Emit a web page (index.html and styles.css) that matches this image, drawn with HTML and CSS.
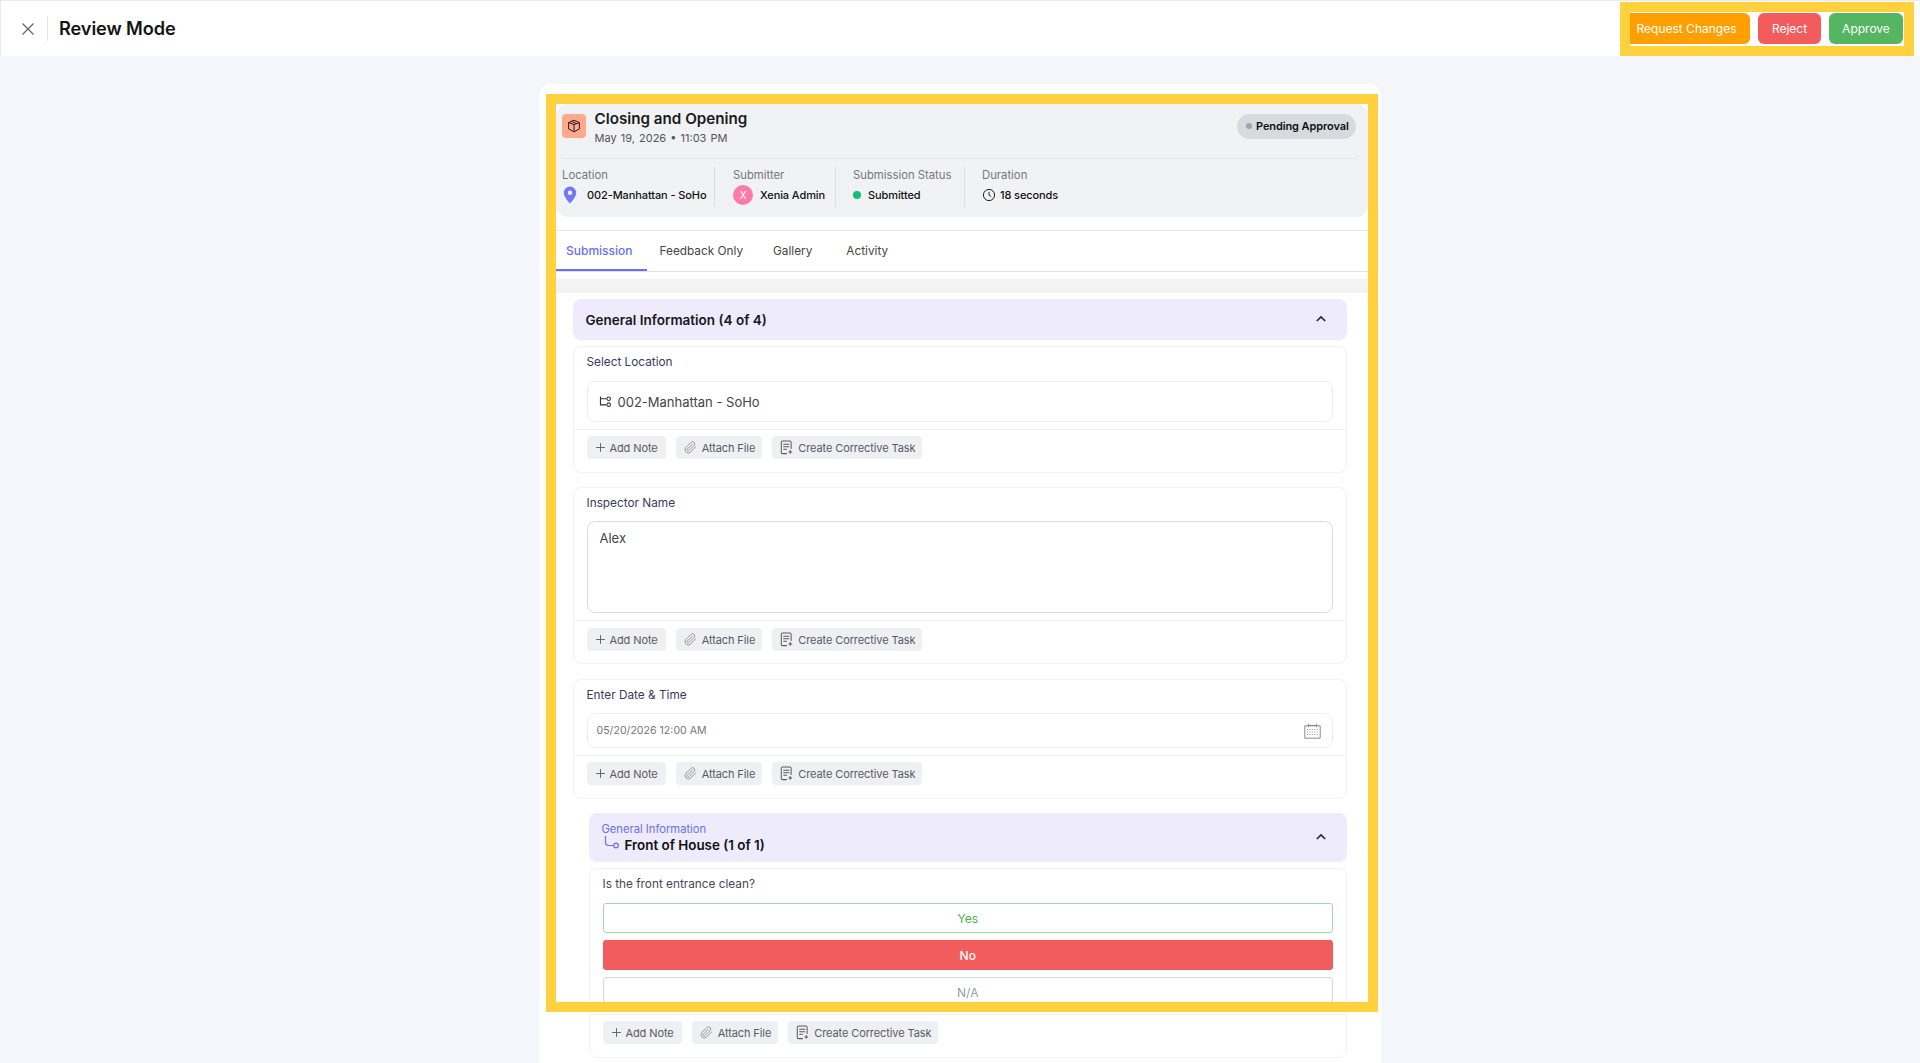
FILE: index.html
```html
<!DOCTYPE html>
<html lang="en">
<head>
<meta charset="utf-8">
<title>Review Mode</title>
<link rel="stylesheet" href="styles.css">
</head>
<body>
<svg class="defs" width="0" height="0" aria-hidden="true">
  <symbol id="i-plus" viewBox="0 0 12 12"><path d="M6 1.2v9.6M1.2 6h9.6" fill="none" stroke="currentColor" stroke-width="1"/></symbol>
  <symbol id="i-clip" viewBox="0 0 24 24"><path d="M21.44 11.05l-9.19 9.19a6 6 0 0 1-8.49-8.49l9.19-9.19a4 4 0 0 1 5.66 5.66l-9.2 9.19a2 2 0 0 1-2.83-2.83l8.49-8.48" fill="none" stroke="currentColor" stroke-width="1.6" stroke-linecap="round" stroke-linejoin="round"/></symbol>
  <symbol id="i-task" viewBox="0 0 14 16"><path d="M7 14.6H3a1.6 1.6 0 0 1-1.6-1.6V2.6A1.6 1.6 0 0 1 3 1h7.4A1.6 1.6 0 0 1 12 2.6V9M4 4.6h5.6M4 7.2h5.6M4 9.8h3" fill="none" stroke="currentColor" stroke-width="1.1" stroke-linecap="round"/><path d="M11 10.8v4M9 12.8h4" fill="none" stroke="currentColor" stroke-width="1.1"/></symbol>
  <symbol id="i-up" viewBox="0 0 12 12"><path d="M1.8 8 6 3.9 10.2 8" fill="none" stroke="currentColor" stroke-width="1.7"/></symbol>
</svg>

<header class="topbar">
  <div class="topbar-left">
    <svg class="close-icon" viewBox="0 0 14 14"><path d="M1.5 1.5l11 11M12.5 1.5l-11 11" fill="none" stroke="currentColor" stroke-width="1.3"/></svg>
    <span class="topbar-sep"></span>
    <h1 class="topbar-title">Review Mode</h1>
  </div>
  <div class="topbar-actions">
    <button class="act act-orange">Request Changes</button>
    <button class="act act-red">Reject</button>
    <button class="act act-green">Approve</button>
  </div>
  <div class="frame frame-actions"></div>
</header>

<main class="page">
  <div class="sheet">
    <section class="summary">
      <div class="summary-head">
        <span class="form-icon">
          <svg viewBox="0 0 14 14"><path d="M7 1.2 12.4 3.6V10L7 12.8 1.6 10V3.6ZM1.6 3.6 7 5.6l5.4-2M7 5.6v7.2M4.4 2.4l5.4 2.2" fill="none" stroke="#2b1c1c" stroke-width="1" stroke-linejoin="round"/></svg>
        </span>
        <div class="form-title">
          <h2>Closing and Opening</h2>
          <p>May 19, 2026 • 11:03 PM</p>
        </div>
        <span class="pill"><i></i>Pending Approval</span>
      </div>
      <div class="meta">
        <div class="meta-col meta-location">
          <span class="meta-label">Location</span>
          <span class="meta-value">
            <svg class="pin" viewBox="0 0 14 18"><path fill-rule="evenodd" d="M7 .6A6.2 6.2 0 0 0 .8 6.8c0 4 4.2 8.6 6.2 10.6 2-2 6.2-6.6 6.2-10.6A6.2 6.2 0 0 0 7 .6Zm0 8.3a2.2 2.2 0 1 1 0-4.4 2.2 2.2 0 0 1 0 4.4Z" fill="#7377f7"/></svg>
            002-Manhattan - SoHo
          </span>
        </div>
        <div class="meta-col meta-submitter">
          <span class="meta-label">Submitter</span>
          <span class="meta-value"><span class="avatar">X</span>Xenia Admin</span>
        </div>
        <div class="meta-col meta-status">
          <span class="meta-label">Submission Status</span>
          <span class="meta-value"><i class="dot"></i>Submitted</span>
        </div>
        <div class="meta-col meta-duration">
          <span class="meta-label">Duration</span>
          <span class="meta-value">
            <svg class="clock" viewBox="0 0 14 14"><circle cx="7" cy="7" r="5.6" fill="none" stroke="#222" stroke-width="1"/><path d="M7 3.8V7l2.2 1.6" fill="none" stroke="#222" stroke-width="1"/></svg>
            18 seconds
          </span>
        </div>
      </div>
    </section>

    <nav class="tabs">
      <a class="tab tab-active">Submission</a>
      <a class="tab tab-feedback">Feedback Only</a>
      <a class="tab tab-gallery">Gallery</a>
      <a class="tab tab-activity">Activity</a>
    </nav>
    <div class="strip"></div>

    <div class="sections">
      <div class="section-head">
        <h3>General Information (4 of 4)</h3>
        <svg class="chev"><use href="#i-up"/></svg>
      </div>

      <article class="q q-first">
        <label class="q-label">Select Location</label>
        <div class="field field-loc">
          <svg class="tree" viewBox="0 0 14 14"><path d="M1.6 1.6v9h6M1.6 4h6" fill="none" stroke="#333" stroke-width="1.2"/><circle cx="10.4" cy="4" r="1.9" fill="none" stroke="#333" stroke-width="1.2"/><circle cx="10.4" cy="10.4" r="1.9" fill="none" stroke="#333" stroke-width="1.2"/></svg>
          002-Manhattan - SoHo
        </div>
        <div class="tools">
          <button class="tool"><svg class="ti ti-plus"><use href="#i-plus"/></svg>Add Note</button>
          <button class="tool"><svg class="ti ti-clip"><use href="#i-clip"/></svg>Attach File</button>
          <button class="tool"><svg class="ti ti-task"><use href="#i-task"/></svg>Create Corrective Task</button>
        </div>
      </article>

      <article class="q q-second">
        <label class="q-label">Inspector Name</label>
        <div class="field field-text">Alex</div>
        <div class="tools tools-tall">
          <button class="tool"><svg class="ti ti-plus"><use href="#i-plus"/></svg>Add Note</button>
          <button class="tool"><svg class="ti ti-clip"><use href="#i-clip"/></svg>Attach File</button>
          <button class="tool"><svg class="ti ti-task"><use href="#i-task"/></svg>Create Corrective Task</button>
        </div>
      </article>

      <article class="q q-third">
        <label class="q-label">Enter Date &amp; Time</label>
        <div class="field field-date">
          <span>05/20/2026 12:00 AM</span>
          <svg class="cal" viewBox="0 0 17 16"><path d="M.8 2.8h15.4v12.4H.8zM4.5 .8v3.2M12.5 .8v3.2M4.5 2.4h8" fill="none" stroke="#8a8a8a" stroke-width="1"/><path d="M3 6.5h11M3 9h11M3 11.5h11" fill="none" stroke="#8f8f8f" stroke-width="1" stroke-dasharray="1 1.4"/></svg>
        </div>
        <div class="tools">
          <button class="tool"><svg class="ti ti-plus"><use href="#i-plus"/></svg>Add Note</button>
          <button class="tool"><svg class="ti ti-clip"><use href="#i-clip"/></svg>Attach File</button>
          <button class="tool"><svg class="ti ti-task"><use href="#i-task"/></svg>Create Corrective Task</button>
        </div>
      </article>

      <div class="nested">
        <div class="sub-head">
          <div>
            <span class="sub-parent">General Information</span>
            <div class="sub-title">
              <svg class="branch" viewBox="0 0 16 14"><path d="M1.5 0v6.5a3 3 0 0 0 3 3h5" fill="none" stroke="#6c6ef5" stroke-width="1.2"/><circle cx="12" cy="9.5" r="2.3" fill="none" stroke="#6c6ef5" stroke-width="1.2"/></svg>
              <h4>Front of House (1 of 1)</h4>
            </div>
          </div>
          <svg class="chev"><use href="#i-up"/></svg>
        </div>
        <article class="q q-nested">
          <label class="q-label q-label-dark">Is the front entrance clean?</label>
          <div class="choices">
            <button class="choice choice-yes">Yes</button>
            <button class="choice choice-no">No</button>
            <button class="choice choice-na">N/A</button>
          </div>
          <div class="tools">
            <button class="tool"><svg class="ti ti-plus"><use href="#i-plus"/></svg>Add Note</button>
            <button class="tool"><svg class="ti ti-clip"><use href="#i-clip"/></svg>Attach File</button>
            <button class="tool"><svg class="ti ti-task"><use href="#i-task"/></svg>Create Corrective Task</button>
          </div>
        </article>
      </div>
    </div>
  </div>
</main>
<div class="frame frame-sheet"></div>
</body>
</html>
```

FILE: styles.css
```css
* { box-sizing: border-box; }
html, body { height: 100%; }
body {
  margin: 0;
  height: 1063px;
  overflow: hidden;
  position: relative;
  background: #f5f6fb;
  color: #111;
  font-family: Inter, "Noto Sans", "Liberation Sans", sans-serif;
}
.defs { position: absolute; }
h1, h2, h3, h4, p { margin: 0; }
button { font-family: inherit; border: 0; padding: 0; }

/* Top bar */
.topbar {
  position: relative;
  height: 56px;
  display: flex;
  align-items: center;
  justify-content: space-between;
  background: #fff;
  border-top: 1px solid #ececec;
  border-left: 1px solid #ececec;
}
.topbar-left { display: flex; align-items: center; }
.close-icon { width: 14px; height: 14px; margin-left: 20px; color: #666; }
.topbar-sep { width: 1px; height: 25px; background: #e4e4e4; margin-left: 12px; }
.topbar-title { font-size: 18.2px; font-weight: 600; line-height: 24px; margin-left: 11px; margin-top: -1px; letter-spacing: -.1px; color: #141414; }
.topbar-actions { display: flex; gap: 8px; margin-right: 17px; }
.act {
  height: 31px;
  border-radius: 6px;
  color: #fff;
  font-size: 12px;
  font-weight: 400;
}
.act-orange { width: 127px; background: #ffa000; }
.act-red { width: 63px; background: #f25c5c; }
.act-green { width: 74px; background: #55b560; }

/* Highlight frames laid over the page */
.frame { position: absolute; border: 10px solid #ffd13f; pointer-events: none; }
.frame-actions { right: 6px; top: 1px; width: 294px; height: 54px; }
.frame-sheet { left: 546px; top: 94px; width: 832px; height: 918px; }

/* Sheet */
.page { display: flex; justify-content: center; padding-top: 28px; }
.sheet {
  width: 842px;
  height: 979px;
  background: #fff;
  border-radius: 12px 12px 0 0;
  padding: 20px 13px 0 17px;
  overflow: hidden;
}
.summary { background: #f1f2f4; border-radius: 12px; height: 113px; padding: 10px 11px 0 6px; }
.summary-head {
  display: flex;
  align-items: flex-start;
  height: 45px;
  border-bottom: 1px solid #e5e6e9;
}
.form-icon {
  width: 24px; height: 24px;
  border-radius: 4px;
  background: #ffa98d;
  display: flex; align-items: center; justify-content: center;
}
.form-icon svg { width: 14px; height: 14px; }
.form-title { margin-left: 8.5px; flex: 1; margin-top: -5px; }
.form-title h2 { font-size: 15.2px; font-weight: 600; line-height: 20px; color: #1c1c20; }
.form-title p { font-size: 11px; line-height: 16px; color: #555; margin-top: 1px; word-spacing: 1px; }
.pill {
  display: flex; align-items: center;
  height: 25px;
  width: 119px;
  margin-right: 1px;
  padding-left: 9px;
  padding-bottom: 1px;
  border-radius: 13px;
  background: #d5dbdf;
  font-size: 11px;
  letter-spacing: -.1px;
  font-weight: 600;
  white-space: nowrap;
}
.pill i { width: 6px; height: 6px; border-radius: 50%; background: #9aa7b1; margin-right: 4px; }
.meta { display: flex; padding-top: 8px; height: 55px; }
.meta-col { display: flex; flex-direction: column; height: 40px; border-right: 1px solid #dcdee1; }
.meta-location { width: 153px; }
.meta-submitter { width: 121px; padding-left: 18px; }
.meta-status { width: 129px; padding-left: 17px; }
.meta-duration { border-right: 0; padding-left: 17px; }
.meta-label { font-size: 11.3px; line-height: 16px; color: #777; white-space: nowrap; }
.meta-value { display: flex; align-items: center; height: 22px; margin-top: 1px; font-size: 11px; letter-spacing: -.1px; font-weight: 500; white-space: nowrap; color: #111; }
.pin { width: 14px; height: 18px; margin-left: 1px; margin-right: 10px; }
.avatar {
  width: 20px; height: 20px; border-radius: 50%;
  background: #ff7aa5; color: #fff;
  font-size: 10px; font-weight: 400;
  display: flex; align-items: center; justify-content: center;
  margin-right: 7px;
}
.dot { width: 8px; height: 8px; border-radius: 50%; background: #10bf73; margin-right: 7px; }
.clock { width: 14px; height: 14px; margin-right: 4px; }

/* Tabs */
.tabs {
  margin-top: 13px;
  height: 42px;
  position: relative;
  display: flex;
  align-items: center;
  border-top: 1px solid #e8e8e8;
  border-bottom: 1px solid #e2e2e4;
  padding: 0 0 1px 10px;
}
.tab { font-size: 11.8px; font-weight: 400; color: #444; white-space: nowrap; }
.tab-active { font-size: 12px; color: #6c6ef5; font-weight: 500; position: relative; }
.tab-active::after {
  content: "";
  position: absolute;
  left: -10px; right: -14px; top: 26px;
  height: 2px;
  background: #6c6ef5;
}
.tab-feedback { margin-left: 27px; }
.tab-gallery { margin-left: 30px; }
.tab-activity { margin-left: 34px; }
.strip { height: 14px; margin-top: 7px; background: #f3f3f4; }

/* Sections */
.sections { padding: 6px 21px 0 16.5px; }
.section-head {
  height: 41px;
  display: flex;
  align-items: center;
  justify-content: space-between;
  padding: 0 20px 0 13px;
  background: #eeebfc;
  border-radius: 8px;
}
.section-head h3 { font-size: 13.5px; font-weight: 600; color: #17171c; }
.chev { width: 12px; height: 12px; color: #2a2a33; margin-top: -1px; }

.q { border: 1px solid #f2f2f3; border-radius: 8px; background: #fff; padding-top: 6px; }
.q-first { margin-top: 6px; }
.q-second { margin-top: 14px; }
.q-third { margin-top: 15px; }
.q-label { display: block; font-size: 11.8px; line-height: 18px; padding-left: 13px; color: #3c3a60; }
.q-label-dark { color: #47475a; }
.field {
  margin: 10px 13px 0;
  border: 1px solid #ededee;
  border-radius: 8px;
  background: #fff;
  display: flex;
  align-items: center;
}
.field-loc { height: 41px; padding-left: 11px; font-size: 13px; color: #444; }
.tree { width: 13px; height: 13px; margin-right: 6px; }
.field-text {
  height: 92px;
  margin-top: 9px;
  padding: 7px 12px;
  align-items: flex-start;
  font-size: 13px;
  line-height: 18px;
  color: #444;
  border-color: #dcdcde;
}
.field-date {
  height: 35px;
  margin-top: 9px;
  padding: 0 11px 0 9px;
  justify-content: space-between;
  font-size: 10.6px;
  color: #777;
}
.cal { width: 17px; height: 16px; }
.tools {
  display: flex;
  gap: 10px;
  margin-top: 7px;
  padding: 6px 13px 13px;
  border-top: 1px solid #eeeeef;
}
.tools-tall { padding: 7px 13px 12px; }
.tool {
  display: flex;
  align-items: center;
  height: 23px;
  border-radius: 4px;
  background: #eef0f3;
  color: #5a5a60;
  font-size: 11px;
  letter-spacing: -.1px;
  padding: 0 7px;
  white-space: nowrap;
}
.tool:first-child { padding-right: 8px; }
.ti { flex: none; }
.ti-plus { width: 11px; height: 11px; margin-left: 1px; margin-right: 4px; }
.ti-clip { width: 13px; height: 13px; color: #888; margin-left: 1px; margin-right: 5px; }
.ti-task { width: 13px; height: 15px; margin-left: 1px; margin-right: 5px; }

/* Nested group */
.nested { margin-top: 14px; margin-left: 16px; }
.sub-head {
  height: 49px;
  display: flex;
  align-items: center;
  justify-content: space-between;
  padding: 0 20px 0 13px;
  background: #eeebfc;
  border-radius: 8px;
}
.sub-parent { display: block; font-size: 11.2px; line-height: 14px; color: #6c6ef5; }
.sub-title { display: flex; align-items: center; margin-top: 1px; height: 17px; }
.sub-title h4 { font-size: 13.4px; font-weight: 600; color: #111; white-space: nowrap; }
.branch { width: 16px; height: 14px; margin-left: 2px; margin-right: 5px; margin-top: -4px; }
.q-nested { margin-top: 6px; }
.choices { display: flex; flex-direction: column; gap: 7px; margin: 10px 13px 0; }
.choice { height: 30px; border-radius: 3px; font-size: 12px; background: #fff; }
.choice-yes { border: 1px solid #a5d6a7; color: #4caf50; }
.choice-no { background: #f25c5c; color: #fff; font-weight: 500; }
.choice-na { border: 1px solid #d5dadd; color: #90a0a8; }
```
